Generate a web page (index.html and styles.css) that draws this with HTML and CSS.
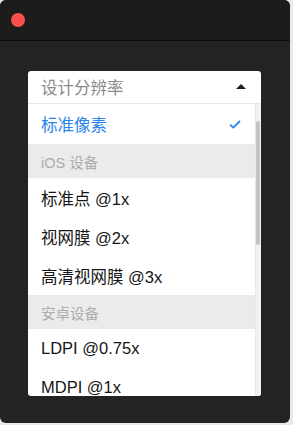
FILE: index.html
```html
<!DOCTYPE html>
<html lang="zh-CN">
<head>
    <meta charset="UTF-8">
    <meta name="viewport" content="width=device-width, initial-scale=1.0">
    <title>设计分辨率</title>
    <link rel="stylesheet" href="styles.css">
</head>
<body>

    <div class="window">
        <div class="titlebar">
            <span class="dot"></span>
        </div>

        <div class="content">
            <div class="select">
                <div class="select-head">
                    <span>设计分辨率</span>
                    <span class="arrow"></span>
                </div>

                <div class="menu">
                    <div class="options">
                        <div class="option selected">
                            <span>标准像素</span>
                            <svg class="check" width="12" height="9" viewBox="0 0 12 9">
                                <path d="M1 4.6 L4.3 7.6 L11 1" fill="none" stroke="#2b84ee" stroke-width="1.8"/>
                            </svg>
                        </div>
                        <div class="group">iOS 设备</div>
                        <div class="option">标准点 @1x</div>
                        <div class="option">视网膜 @2x</div>
                        <div class="option">高清视网膜 @3x</div>
                        <div class="group">安卓设备</div>
                        <div class="option">LDPI @0.75x</div>
                        <div class="option">MDPI @1x</div>
                    </div>
                    <div class="scrollbar">
                        <div class="thumb"></div>
                    </div>
                </div>
            </div>
        </div>
    </div>

</body>
</html>
```

FILE: styles.css
```css
* {
    margin: 0;
    padding: 0;
    box-sizing: border-box;
}

body {
    background: #e9e9e9;
    font-family: 'Liberation Sans', 'Noto Sans CJK SC', sans-serif;
    width: 293px;
    height: 425px;
    overflow: hidden;
}

.window {
    width: 290px;
    height: 423px;
    background: #232323;
    border-radius: 6px;
    overflow: hidden;
    display: flex;
    flex-direction: column;
}

.titlebar {
    height: 41px;
    flex-shrink: 0;
    background: #1c1c1c;
    border-bottom: 1px solid #0b0b0b;
    display: flex;
    align-items: center;
    padding-left: 11px;
}

.dot {
    width: 14px;
    height: 14px;
    border-radius: 50%;
    background: #fc4f4b;
}

.content {
    padding: 30px 29px 0 28px;
}

.select {
    background: #fff;
    border-radius: 3px;
    overflow: hidden;
}

.select-head {
    height: 33px;
    display: flex;
    align-items: center;
    justify-content: space-between;
    padding: 0 15px 0 13px;
    font-size: 16.5px;
    color: #8b8b8b;
    border-bottom: 1px solid #e6e6e6;
}

.arrow {
    width: 0;
    height: 0;
    border-left: 5.5px solid transparent;
    border-right: 5.5px solid transparent;
    border-bottom: 5px solid #1e1e1e;
    margin-top: -2px;
}

.menu {
    height: 292px;
    display: flex;
    overflow: hidden;
}

.options {
    flex: 1;
}

.option {
    height: 39px;
    display: flex;
    align-items: center;
    justify-content: space-between;
    padding: 0 14px 0 13px;
    font-size: 16.5px;
    color: #151515;
}

.option.selected {
    height: 40px;
    color: #2b84ee;
}

.check {
    margin-top: 1px;
}

.group {
    height: 34px;
    display: flex;
    align-items: center;
    padding-left: 13px;
    background: #ebebeb;
    font-size: 14.5px;
    color: #adadad;
}

.scrollbar {
    width: 6px;
    flex-shrink: 0;
    background: #f2f2f2;
    border-left: 1px solid #e8e8e8;
    padding-top: 17px;
}

.thumb {
    width: 4px;
    height: 124px;
    background: #c4c4c4;
    border-radius: 2px;
}
```
